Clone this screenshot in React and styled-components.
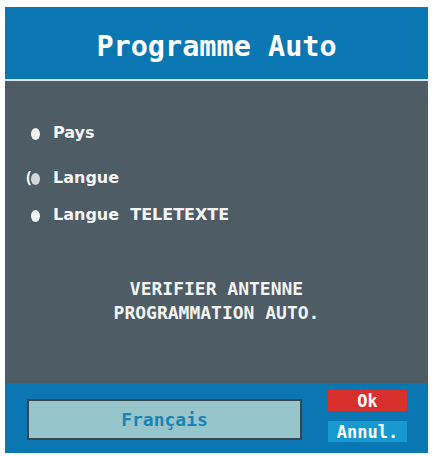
import styled, { createGlobalStyle } from "styled-components";

const GlobalStyle = createGlobalStyle`
  body {
    margin: 0;
    background: #ffffff;
  }
`;

export default function App() {
  return (
    <>
      <GlobalStyle />
      <Frame>
        <TitleBar>Programme Auto</TitleBar>
        <Separator />
        <Panel>
          <MenuRow>
            <Bullet />
            <span>Pays</span>
          </MenuRow>
          <MenuRow $space={25} $selected>
            <Bracket>(</Bracket>
            <Bullet $dim />
            <span>Langue</span>
          </MenuRow>
          <MenuRow $space={17}>
            <Bullet />
            <span>Langue&nbsp; TELETEXTE</span>
          </MenuRow>
          <Message>
            VERIFIER ANTENNE
            <br />
            PROGRAMMATION AUTO.
          </Message>
        </Panel>
        <Footer>
          <ValueField>Français</ValueField>
          <Buttons>
            <KeyButton $color="#d8302c">Ok</KeyButton>
            <KeyButton $color="#1799cf">Annul.</KeyButton>
          </Buttons>
        </Footer>
      </Frame>
    </>
  );
}

const Frame = styled.div`
  margin: 7px 0 0 5px;
  width: 423px;
  height: 446px;
  display: flex;
  flex-direction: column;
  font-family: "DejaVu Sans Mono", monospace;
  font-weight: bold;
  color: #ffffff;
`;

const TitleBar = styled.div`
  height: 72px;
  box-sizing: border-box;
  padding-top: 7px;
  display: flex;
  align-items: center;
  justify-content: center;
  background: #0a77b2;
  font-size: 28.5px;
`;

const Separator = styled.div`
  height: 2px;
  background: #dfe6ea;
`;

const Panel = styled.div`
  flex: 1;
  background: #4d5c65;
  padding-top: 42px;
  display: flex;
  flex-direction: column;
`;

const MenuRow = styled.div`
  position: relative;
  height: 20px;
  margin-top: ${(p) => p.$space || 0}px;
  padding-left: 26px;
  display: flex;
  align-items: center;
  gap: 13px;
  font-family: "DejaVu Sans", sans-serif;
  font-size: 16px;
  line-height: 20px;
  color: #f4f6f7;
`;

const Bullet = styled.i`
  width: 9px;
  height: 12px;
  border-radius: 50%;
  background: ${(p) => (p.$dim ? "#d4d8dc" : "#f2f4f5")};
  margin-top: 1px;
`;

const Bracket = styled.span`
  position: absolute;
  left: 19px;
  top: 0;
  font-family: "DejaVu Sans Mono", monospace;
  font-size: 15px;
  color: #ffffff;
`;

const Message = styled.div`
  margin-top: 52px;
  text-align: center;
  font-size: 18px;
  line-height: 24px;
  color: #f2f4f5;
`;

const Footer = styled.div`
  height: 70px;
  box-sizing: border-box;
  background: #0a77b2;
  padding: 7px 0 0 22px;
  display: flex;
  align-items: flex-start;
`;

const ValueField = styled.div`
  margin-top: 9px;
  width: 275px;
  height: 41px;
  box-sizing: border-box;
  border: 2px solid #34474f;
  background: #96c6cb;
  display: flex;
  align-items: center;
  justify-content: center;
  font-size: 18px;
  color: #1a82b4;
`;

const Buttons = styled.div`
  margin-left: 26px;
  width: 79px;
  display: flex;
  flex-direction: column;
  gap: 10px;
`;

const KeyButton = styled.div`
  height: 21px;
  background: ${(p) => p.$color};
  display: flex;
  align-items: center;
  justify-content: center;
  font-size: 17px;
  color: #ffffff;
`;
